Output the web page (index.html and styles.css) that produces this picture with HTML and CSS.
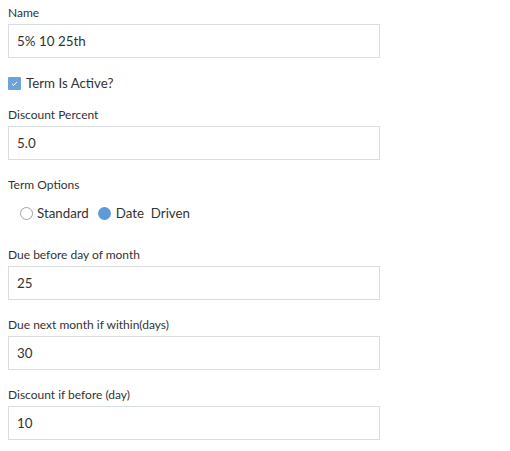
FILE: index.html
```html
<!DOCTYPE html>
<html>
<head>
<meta charset="utf-8">
<link rel="stylesheet" href="styles.css">
</head>
<body>
<form class="form">
  <div class="field">
    <label class="label">Name</label>
    <div class="input">5% 10 25th</div>
  </div>
  <div class="check-row">
    <span class="checkbox">
      <svg width="13" height="13" viewBox="0 0 13 13"><rect width="13" height="13" rx="1" fill="#6ba3da"/><path d="M4 6.8 L5.7 8.4 L9 4.9" stroke="#fff" stroke-width="1" fill="none"/></svg>
    </span>
    <span class="check-label">Term Is Active?</span>
  </div>
  <div class="field">
    <label class="label">Discount Percent</label>
    <div class="input">5.0</div>
  </div>
  <div class="field field-radios">
    <label class="label">Term Options</label>
    <div class="radios">
      <span class="radio"></span><span class="radio-label">Standard</span>
      <span class="radio radio-on"></span><span class="radio-label">Date&nbsp; Driven</span>
    </div>
  </div>
  <div class="field">
    <label class="label">Due before day of month</label>
    <div class="input">25</div>
  </div>
  <div class="field">
    <label class="label">Due next month if within(days)</label>
    <div class="input">30</div>
  </div>
  <div class="field">
    <label class="label">Discount if before (day)</label>
    <div class="input">10</div>
  </div>
</form>
</body>
</html>
```

FILE: styles.css
```css
body {
  margin: 0;
  padding: 6px 8px;
  background: #fff;
  font-family: Lato, "Open Sans", sans-serif;
  color: #333;
}
.form {
  width: 372px;
  display: flex;
  flex-direction: column;
}
.field {
  display: flex;
  flex-direction: column;
  margin-bottom: 18px;
}
.field-radios {
  margin-bottom: 22px;
}
.label {
  font-size: 12px;
  line-height: 14px;
  margin-bottom: 4px;
  color: #333;
}
.input {
  box-sizing: border-box;
  height: 34px;
  border: 1px solid #d9dddf;
  padding: 0 8px;
  display: flex;
  align-items: center;
  font-size: 13.4px;
  color: #333;
}
.check-row {
  display: flex;
  align-items: center;
  margin-top: -1px;
  margin-bottom: 17px;
  height: 16px;
}
.checkbox {
  display: flex;
  width: 13px;
  height: 13px;
  margin-right: 5px;
}
.check-label {
  font-size: 13.3px;
}
.radios {
  display: flex;
  align-items: center;
  padding-left: 12px;
  height: 26px;
  margin-top: 4px;
}
.radio {
  box-sizing: border-box;
  width: 13px;
  height: 13px;
  border-radius: 50%;
  border: 1px solid #9aa3ab;
  margin-right: 4px;
}
.radio-on {
  border: none;
  background: #5b9bd9;
  margin-right: 5px;
}
.radio-label {
  font-size: 13.3px;
  margin-right: 9px;
}
```
